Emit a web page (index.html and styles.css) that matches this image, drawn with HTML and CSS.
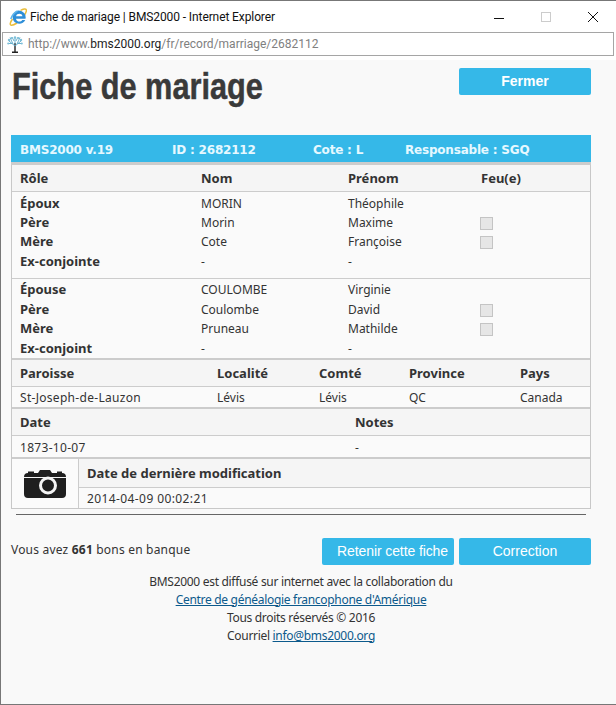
FILE: index.html
```html
<!DOCTYPE html>
<html lang="fr">
<head>
    <meta charset="UTF-8">
    <meta name="viewport" content="width=device-width, initial-scale=1.0">
    <title>Fiche de mariage | BMS2000</title>
    <link rel="stylesheet" href="styles.css">
</head>
<body>

    <div class="window">
        <div class="titlebar">
            <svg width="18" height="18" viewBox="0 0 18 18">
                <path d="M3.500 11C1 14.500 .5 17 2.500 17.200 4 17.300 6 16.300 8 15M11.500 2.500C14 .8 16.800 .3 17.300 1.800 17.700 3 16.800 5 15.500 7" fill="none" stroke="#e9bd3a" stroke-width="1.500"/>
                <path d="M9.800 2.500a6.800 6.800 0 0 1 6.700 8.200H7c.3 3.300 4.700 3.700 6.300 1.200h3c-2 5.200-11.800 5.300-12.600-1.800C3.300 6.300 6.300 2.500 9.800 2.500zM7.100 8.200h6.300c-.3-3.100-5.700-3.200-6.300 0z" fill="#2f8fd8"/>
                <path d="M8.500 3C5.500 4.500 3 7.500 1.800 11" fill="none" stroke="#5db4ea" stroke-width="1.500"/>
            </svg>
            <span class="window-title">Fiche de mariage | BMS2000 - Internet Explorer</span>
            <div class="window-btns">
                <svg width="12" height="12" viewBox="0 0 12 12"><path d="M1 7.500H11" stroke="#111" stroke-width="1"/></svg>
                <svg width="12" height="12" viewBox="0 0 12 12"><rect x="1.500" y="1.500" width="9" height="9" fill="none" stroke="#ccc"/></svg>
                <svg width="12" height="12" viewBox="0 0 12 12"><path d="M1 1L11 11M11 1L1 11" stroke="#111" stroke-width="1"/></svg>
            </div>
        </div>
        <div class="urlbar">
            <svg width="16" height="17" viewBox="0 0 16 17">
                <path d="M8 7V16M5 16.300H11" stroke="#222" stroke-width="1.400" fill="none"/>
                <path d="M8 10L2 5M8 10L14 5M8 8V1M6 8L3 1.500M10 8L13 1.500M5 7.500L1 7.500M11 7.500L15 7.500M7 5L5 1M9 5L11 1" stroke="#5aa8c8" stroke-width=".9" fill="none"/>
                <circle cx="2" cy="4" r="1.200" fill="#7cc0da"/>
                <circle cx="14" cy="4" r="1.200" fill="#7cc0da"/>
                <circle cx="8" cy="1.500" r="1.200" fill="#7cc0da"/>
                <circle cx="4.500" cy="2" r="1" fill="#7cc0da"/>
                <circle cx="11.500" cy="2" r="1" fill="#7cc0da"/>
                <circle cx="1.200" cy="7.500" r="1" fill="#7cc0da"/>
                <circle cx="14.800" cy="7.500" r="1" fill="#7cc0da"/>
            </svg>
            <span class="url">http://www.<b>bms2000.org</b>/fr/record/marriage/2682112</span>
        </div>

        <div class="page">
            <div class="page-head">
                <h1>Fiche de mariage</h1>
                <a class="btn btn-bold">Fermer</a>
            </div>

            <div class="record">
                <div class="record-bar">
                    <span class="bar-version">BMS2000 v.19</span>
                    <span class="bar-id">ID : 2682112</span>
                    <span class="bar-cote">Cote : L</span>
                    <span>Responsable : SGQ</span>
                </div>

                <div class="row persons head line">
                    <span>Rôle</span><span>Nom</span><span>Prénom</span><span>Feu(e)</span>
                </div>

                <div class="group line">
                    <div class="row persons first"><b>Époux</b><span>MORIN</span><span>Théophile</span><span></span></div>
                    <div class="row persons"><b>Père</b><span>Morin</span><span>Maxime</span><span><i class="check"></i></span></div>
                    <div class="row persons"><b>Mère</b><span>Cote</span><span>Françoise</span><span><i class="check"></i></span></div>
                    <div class="row persons"><b>Ex-conjointe</b><span>-</span><span>-</span><span></span></div>
                </div>

                <div class="group thick">
                    <div class="row persons first"><b>Épouse</b><span>COULOMBE</span><span>Virginie</span><span></span></div>
                    <div class="row persons"><b>Père</b><span>Coulombe</span><span>David</span><span><i class="check"></i></span></div>
                    <div class="row persons"><b>Mère</b><span>Pruneau</span><span>Mathilde</span><span><i class="check"></i></span></div>
                    <div class="row persons"><b>Ex-conjoint</b><span>-</span><span>-</span><span></span></div>
                </div>

                <div class="row places head line">
                    <span>Paroisse</span><span>Localité</span><span>Comté</span><span>Province</span><span>Pays</span>
                </div>
                <div class="row places value thick">
                    <span class="wide">St-Joseph-de-Lauzon</span><span>Lévis</span><span>Lévis</span><span>QC</span><span>Canada</span>
                </div>

                <div class="row dates head line"><span>Date</span><span>Notes</span></div>
                <div class="row dates value date-value thick"><span class="wide">1873-10-07</span><span>-</span></div>

                <div class="modified">
                    <div class="photo">
                        <svg width="42" height="32" viewBox="0 0 42 32">
                            <path d="M4 6V4.500H10V6H14L16 3H26L28 6H33V4.500H38V6Q42 6 42 10V27Q42 31 38 31H4Q0 31 0 27V10Q0 6 4 6z" fill="#1f1f1f"/>
                            <rect x="0" y="10" width="42" height="1" fill="#f4f4f4"/>
                            <circle cx="24" cy="18.500" r="7.500" fill="#1f1f1f" stroke="#f4f4f4" stroke-width="3"/>
                        </svg>
                    </div>
                    <div class="modified-info">
                        <div class="modified-head">Date de dernière modification</div>
                        <div class="modified-value wide">2014-04-09 00:02:21</div>
                    </div>
                </div>
            </div>

            <hr class="rule">

            <div class="actions">
                <span class="balance">Vous avez <b>661</b> bons en banque</span>
                <div class="action-btns">
                    <a class="btn btn-keep">Retenir cette fiche</a>
                    <a class="btn">Correction</a>
                </div>
            </div>

            <div class="footer">
                <p>BMS2000 est diffusé sur internet avec la collaboration du</p>
                <p><a href="#">Centre de généalogie francophone d'Amérique</a></p>
                <p>Tous droits réservés © 2016</p>
                <p>Courriel <a href="#">info@bms2000.org</a></p>
            </div>
        </div>
    </div>

</body>
</html>
```

FILE: styles.css
```css
* {
    box-sizing: border-box;
}

html, body {
    height: 100%;
}

body {
    margin: 0;
    font-family: "Noto Sans", "DejaVu Sans", sans-serif;
    font-size: 12px;
    color: #333;
    background-color: #fff;
}

.window {
    height: 705px;
    display: flex;
    flex-direction: column;
    border: 1px solid #777;
    border-right: none;
}

.titlebar {
    height: 31px;
    display: flex;
    align-items: center;
    padding-left: 8px;
    flex: none;
}

.window-title {
    margin-left: 3px;
    font-family: Roboto, sans-serif;
    font-size: 12px;
    letter-spacing: -0.1px;
    color: #111;
}

.window-btns {
    margin-left: auto;
    display: flex;
    gap: 35px;
    padding-right: 17px;
}

.urlbar {
    height: 24px;
    margin: 0 0 0 1px;
    width: 612px;
    border: 1px solid #a5a5a5;
    display: flex;
    align-items: center;
    gap: 5px;
    padding-left: 4px;
    flex: none;
}

.url {
    font-family: Roboto, sans-serif;
    font-size: 12px;
    color: #808080;
}

.url b {
    font-weight: normal;
    color: #222;
}

.page {
    flex: 1;
    margin-top: 4px;
    padding: 8px 25px 0 10px;
    background-color: #f9f9f9;
}

.page-head {
    display: flex;
    justify-content: space-between;
    align-items: flex-start;
    height: 67px;
}

h1 {
    margin: -1px 0 0 1px;
    font-family: "Liberation Sans", sans-serif;
    font-size: 37px;
    line-height: 40px;
    font-weight: bold;
    color: #3a3a3a;
    white-space: nowrap;
    -webkit-text-stroke: 0.5px #3a3a3a;
    transform: scaleX(0.83);
    transform-origin: left;
}

.btn {
    display: block;
    width: 132px;
    height: 27px;
    line-height: 26px;
    text-align: center;
    font-family: "Liberation Sans", Arial, sans-serif;
    font-size: 14px;
    color: #fff;
    background-color: #35b8e8;
    border-radius: 2px;
}

.btn-bold {
    font-weight: bold;
}

.btn-keep {
    padding-left: 9px;
    letter-spacing: -0.1px;
    white-space: nowrap;
}

.record {
    width: 580px;
    border: 1px solid #c8c8c8;
    border-top: none;
    background-color: #fafafa;
}

.record-bar {
    height: 30px;
    margin: 0 -1px;
    padding: 2px 0 0 9px;
    display: flex;
    align-items: center;
    font-family: "DejaVu Sans", sans-serif;
    font-size: 12px;
    letter-spacing: -0.2px;
    font-weight: bold;
    color: #e6f8ff;
    background-color: #35b8e8;
    border-bottom: 3px solid #ccc;
}

.bar-version {
    width: 152px;
}

.bar-id {
    width: 141px;
}

.bar-cote {
    width: 92px;
}

.row {
    display: grid;
    align-items: center;
    padding-left: 8px;
    height: 19.300px;
}

.row b,
.head,
.modified-head {
    font-weight: bold;
    font-size: 13px;
}

.row b {
    padding-bottom: 1px;
}

.head {
    height: 27px;
    background-color: #f5f5f5;
}

.persons {
    grid-template-columns: 181px 147px 133px 1fr;
    grid-template-rows: 100%;
}

.places {
    grid-template-columns: 197px 102px 90px 111px 1fr;
}

.dates {
    grid-template-columns: 335px 1fr;
}

.row.value {
    height: 22px;
    padding-top: 1px;
}

.row.date-value {
    height: 23px;
    padding-top: 2px;
}

.wide {
    letter-spacing: 0.3px;
}

.group {
    padding: 1px 0 7px;
}

.group .first {
    height: 20px;
}

.group.thick {
    padding-bottom: 0;
}

.line {
    border-bottom: 1px solid #ccc;
}

.thick {
    border-bottom: 2px solid #ccc;
}

.check {
    display: block;
    width: 13px;
    height: 13px;
    margin: 2px 0 0 -1px;
    background-color: #e6e6e6;
    border: 1px solid #c4c4c4;
}

.modified {
    display: flex;
}

.photo {
    width: 67px;
    display: flex;
    align-items: center;
    justify-content: center;
    padding-right: 1px;
    border-right: 1px solid #ccc;
    background-color: #fbfbfb;
}

.modified-info {
    flex: 1;
}

.modified-head {
    height: 29px;
    line-height: 29px;
    padding-left: 8px;
    background-color: #f5f5f5;
    border-bottom: 1px solid #ccc;
}

.modified-value {
    height: 20px;
    line-height: 21px;
    padding-left: 8px;
    letter-spacing: 0.4px;
}

.rule {
    width: 570px;
    margin: 5px 0 0 5px;
    border: none;
    border-top: 1px solid #666;
}

.actions {
    margin-top: 23px;
    display: flex;
    justify-content: space-between;
    align-items: center;
    width: 580px;
}

.balance {
    letter-spacing: 0.2px;
    padding-bottom: 3px;
}

.action-btns {
    display: flex;
    gap: 5px;
}

.footer {
    margin-top: 8px;
    width: 580px;
    text-align: center;
    letter-spacing: -0.3px;
}

.footer p {
    margin: 0;
    line-height: 18px;
}

.footer a {
    color: #0c5a8c;
}
```
